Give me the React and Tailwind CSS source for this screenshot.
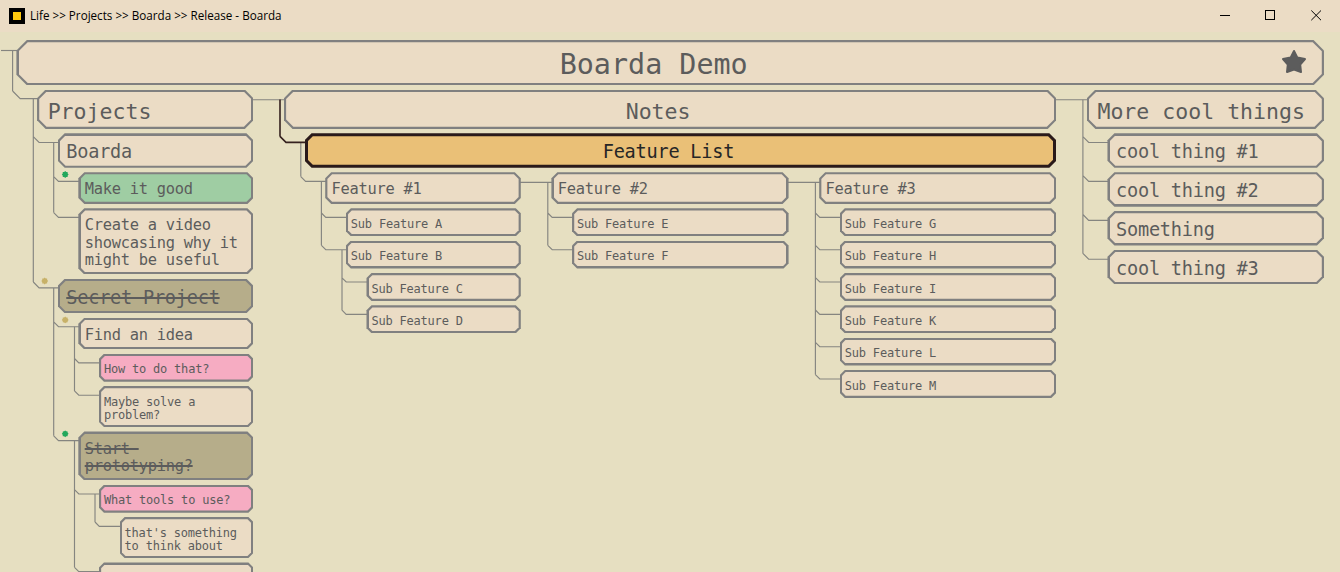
import React from "react";

const LEVELS = {
  0: { cut: 10.4, box: "h-[45.2px] pt-[5px] text-[28.4px] leading-[40px] text-center", inner: "pl-3 pr-[45px]" },
  1: { cut: 8.6, box: "h-[39.4px] pt-[5px] text-[21.55px] leading-[33px]", inner: "px-[10.6px]" },
  2: { cut: 7, box: "h-[34.5px] pt-[6px] text-[18.6px] tracking-[-0.24px] leading-[26px]", inner: "px-[8.6px]" },
  3: { cut: 6, box: "pt-[9.2px] pb-[5.4px] text-[15.4px] tracking-[-0.27px] leading-[17.2px]", inner: "pl-[6.4px]" },
  4: { cut: 5, box: "pt-[9.6px] pb-[5.4px] text-[12px] tracking-[-0.21px] leading-[13px]", inner: "pl-[5px]" },
};

const TONES = {
  plain: ["bg-[#808080]", "bg-[#ebdcc5]", "text-[#5c5c5c]"],
  green: ["bg-[#808080]", "bg-[#9fcda3]", "text-[#5c5c5c]"],
  pink: ["bg-[#808080]", "bg-[#f6acc2]", "text-[#5c5c5c]"],
  done: ["bg-[#808080]", "bg-[#b6ad8a]", "text-[#5c5c5c] line-through decoration-[2px]"],
  selected: ["bg-[#2a1a1a]", "bg-[#eac077]", "text-[#262626]"],
};

function chamfer(c) {
  const r = `calc(100% - ${c}px)`;
  return `polygon(${c}px 0, ${r} 0, 100% ${c}px, 100% ${r}, ${r} 100%, ${c}px 100%, 0 ${r}, 0 ${c}px)`;
}

function Card({ level, tone = "plain", center, children }) {
  const l = LEVELS[level];
  const [edge, fill, text] = TONES[tone];
  const border = tone === "selected" ? 3 : 2.2;
  return (
    <div className={`relative shrink-0 ${l.box} ${text} ${center ? "text-center" : ""}`}>
      <div className={`absolute inset-0 ${edge}`} style={{ clipPath: chamfer(l.cut) }}>
        <div className={`absolute ${fill}`} style={{ inset: border, clipPath: chamfer(l.cut - border * 0.586) }} />
      </div>
      <div className={`relative whitespace-pre-line ${l.inner} ${center ? "mr-[24px]" : ""}`}>{children}</div>
    </div>
  );
}

function Node({ level, tone, center, title, className = "", children }) {
  return (
    <div className={`flex flex-col gap-[4.35px] ${className}`}>
      <Card level={level} tone={tone} center={center}>{title}</Card>
      {children && <div className="ml-[20.65px] flex flex-col gap-[4.35px]">{children}</div>}
    </div>
  );
}

function Branch({ x, from, to, ys, bend = 4.8 }) {
  const d = ys
    .map((y) => `M${x} ${y - bend}L${x + bend} ${y}H${to}`)
    .join("");
  return <path d={`M${x} ${from}V${ys[ys.length - 1] - bend}${d}`} />;
}

function Burst({ x, y, fill }) {
  const pts = Array.from({ length: 16 }, (_, i) => {
    const a = (i * Math.PI) / 8;
    const r = i % 2 ? 2.7 : 3.4;
    return `${x + r * Math.cos(a)},${y + r * Math.sin(a)}`;
  }).join(" ");
  return <polygon points={pts} fill={fill} stroke="none" />;
}

function Connectors() {
  return (
    <svg className="pointer-events-none absolute inset-0" width="1340" height="572" fill="none" stroke="#858580" strokeWidth="1.15">
      <path d="M1 50.5H17" />
      <Branch x={12.6} from={50.5} to={38} ys={[98.6]} bend={7.6} />
      <Branch x={33.3} from={99} to={58} ys={[142.5, 287.8]} bend={5.8} />
      <Branch x={53.7} from={142.5} to={79} ys={[181.4, 217.4]} />
      <Branch x={53.7} from={288} to={79} ys={[326.7, 440.6]} />
      <Branch x={74.5} from={326.7} to={99} ys={[362.8, 395.2]} bend={4.3} />
      <Branch x={74.5} from={440.6} to={99} ys={[494, 571.6]} bend={4.3} />
      <Branch x={95} from={494} to={120} ys={[526.3]} bend={4.3} />
      <path d="M253 99.7H285M1056 99.7H1087M520 182.4H552M788 182.4H820" />
      <Branch x={300.8} from={143} to={326} ys={[181.4]} />
      <Branch x={321.4} from={182} to={346} ys={[217.4, 249.7]} bend={4.4} />
      <Branch x={342} from={250} to={367} ys={[282, 314.4]} bend={4.2} />
      <Branch x={547.8} from={182} to={573} ys={[217.4, 249.7]} bend={4.4} />
      <Branch x={815.4} from={182} to={840} ys={[217.4, 249.7, 282, 314.4, 346.7, 379]} bend={4.4} />
      <Branch x={1082.9} from={99.7} to={1108} ys={[142.5, 181.4, 220.3, 259.2]} bend={5.8} />
      <g stroke="#35211f" strokeWidth="1.6">
        <Branch x={280} from={99.5} to={305} ys={[142.4]} bend={6} />
      </g>
      <Burst x={65.2} y={174.5} fill="#22a85c" />
      <Burst x={44.7} y={281} fill="#c7b168" />
      <Burst x={65.2} y={319.9} fill="#c7b168" />
      <Burst x={65.2} y={433.8} fill="#22a85c" />
    </svg>
  );
}

function TitleBar() {
  return (
    <header className="flex h-8 items-center bg-[#ebdcc5] pl-[9px] font-['Open_Sans',sans-serif] text-[12px] text-black">
      <div className="flex size-4 items-center justify-center bg-black">
        <div className="size-2 bg-[#ffc90e]" />
      </div>
      <svg className="ml-[5px] overflow-visible" width="256" height="28">
        <text x="0" y="18" textLength="251.5" lengthAdjust="spacingAndGlyphs">Life &gt;&gt; Projects &gt;&gt; Boarda &gt;&gt; Release - Boarda</text>
      </svg>
      <svg className="ml-auto mr-[18px]" width="102" height="12" fill="none" stroke="#000" strokeWidth="1" shapeRendering="crispEdges">
        <path d="M0 5.5H10" />
        <rect x="45.5" y="0.5" width="9" height="9" />
        <path d="M91.3 0.5L101 10.2M101 0.5L91.3 10.2" shapeRendering="auto" />
      </svg>
    </header>
  );
}

export default function App() {
  return (
    <div className="relative h-[572px] w-[1340px] overflow-hidden bg-[#e6dfc1] font-['DejaVu_Sans_Mono',monospace]">
      <TitleBar />
      <Connectors />
      <main className="relative ml-[16.4px] mt-[8px] flex w-[1307.6px] flex-col gap-[4.4px]">
        <div className="relative">
          <Card level={0}>Boarda Demo</Card>
          <svg className="absolute right-[17px] top-[9px]" width="26" height="26" viewBox="0 0 26 26" fill="#5c5c5c" stroke="#5c5c5c" strokeWidth="2" strokeLinejoin="round">
            <path d="M13 2L16.4 8.6L24 10L19.2 15.6L20 23L13 20.6L6 23L6.8 15.6L2 10L9.6 8.6Z" />
          </svg>
        </div>
        <div className="ml-[20.65px] flex items-start gap-[30.5px]">
          <Node level={1} title="Projects" className="w-[216.4px] shrink-0">
            <Node level={2} title="Boarda">
              <Node level={3} tone="green" title="Make it good" />
              <Node level={3} title={"Create a video\nshowcasing why it\nmight be useful"} />
            </Node>
            <Node level={2} tone="done" title="Secret Project">
              <Node level={3} title="Find an idea">
                <Node level={4} tone="pink" title="How to do that?" />
                <Node level={4} title={"Maybe solve a\nproblem?"} />
              </Node>
              <Node level={3} tone="done" title={"Start\u00a0\nprototyping?"}>
                <Node level={4} tone="pink" title="What tools to use?">
                  <Node level={4} title={"that's something\nto think about"} />
                </Node>
                <Node level={4} title={"\u00a0"} />
              </Node>
            </Node>
          </Node>
          <Node level={1} center title="Notes" className="w-[772.4px] shrink-0">
            <Node level={2} tone="selected" center title="Feature List">
              <div className="flex items-start gap-[30.6px]">
                <Node level={3} title="Feature #1" className="w-[195.6px] shrink-0">
                  <Node level={4} title="Sub Feature A" />
                  <Node level={4} title="Sub Feature B">
                    <Node level={4} title="Sub Feature C" />
                    <Node level={4} title="Sub Feature D" />
                  </Node>
                </Node>
                <Node level={3} title="Feature #2" className="w-[237.2px] shrink-0">
                  <Node level={4} title="Sub Feature E" />
                  <Node level={4} title="Sub Feature F" />
                </Node>
                <Node level={3} title="Feature #3" className="flex-1">
                  {["G", "H", "I", "K", "L", "M"].map((s) => (
                    <Node key={s} level={4} title={`Sub Feature ${s}`} />
                  ))}
                </Node>
              </div>
            </Node>
          </Node>
          <Node level={1} title="More cool things" className="flex-1">
            <Node level={2} title="cool thing #1" />
            <Node level={2} title="cool thing #2" />
            <Node level={2} title="Something" />
            <Node level={2} title="cool thing #3" />
          </Node>
        </div>
      </main>
    </div>
  );
}
